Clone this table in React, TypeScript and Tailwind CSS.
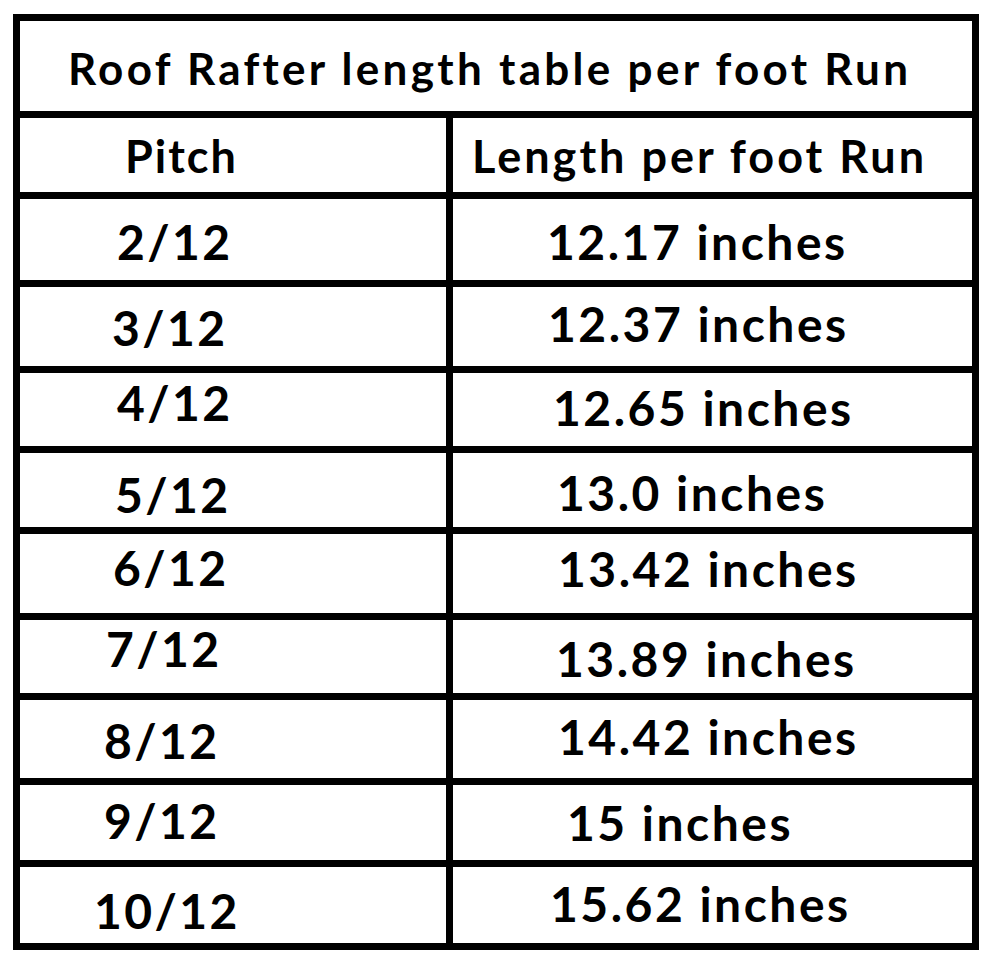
const rows = [
  { h: "h-[88px]", pitch: "2/12", pc: "pl-[97px] pt-[19px]", len: "12.17 inches", lc: "pl-[94px] pt-[19px]" },
  { h: "h-[86px]", pitch: "3/12", pc: "pl-[92px] pt-[17px]", len: "12.37 inches", lc: "pl-[95px] pt-[13px]" },
  { h: "h-[80px]", pitch: "4/12", pc: "pl-[97px] pt-[6px]", len: "12.65 inches", lc: "pl-[100px] pt-[11px]" },
  { h: "h-[81px]", pitch: "5/12", pc: "pl-[95px] pt-[18px]", len: "13.0 inches", lc: "pl-[104px] pt-[16px]" },
  { h: "h-[86px]", pitch: "6/12", pc: "pl-[93px] pt-[10px]", len: "13.42 inches", lc: "pl-[105px] pt-[11px]" },
  { h: "h-[80px]", pitch: "7/12", pc: "pl-[86px] pt-[5px]", len: "13.89 inches", lc: "pl-[103px] pt-[15px]" },
  { h: "h-[85px]", pitch: "8/12", pc: "pl-[84px] pt-[17px]", len: "14.42 inches", lc: "pl-[105px] pt-[13px]" },
  { h: "h-[82px]", pitch: "9/12", pc: "pl-[84px] pt-[12px]", len: "15 inches", lc: "pl-[114px] pt-[14px]" },
  { h: "h-[76px]", pitch: "10/12", pc: "pl-[74px] pt-[20px]", len: "15.62 inches", lc: "pl-[97px] pt-[13px]" },
];

export default function App() {
  return (
    <div
      className="min-h-screen w-[1000px] h-[976px] bg-white pt-[14px] pl-[13px] text-black"
      style={{ fontFamily: "Lato, 'Open Sans', sans-serif" }}
    >
      <div className="w-[966px] border-[7px] border-black">
        {/* titulo */}
        <div className="h-[97px] border-b-[7px] border-black pl-[48px] pt-[25px]">
          <span className="block text-[44px] font-bold leading-none tracking-[3.3px] whitespace-nowrap">
            Roof Rafter length table per foot Run
          </span>
        </div>

        {/* cabecalho */}
        <div className="flex h-[81px] border-b-[7px] border-black">
          <div className="w-[433px] border-r-[7px] border-black pl-[105px] pt-[16px]">
            <span className="block text-[45px] font-bold leading-none tracking-[2px]">Pitch</span>
          </div>
          <div className="flex-1 pl-[19px] pt-[16px]">
            <span className="block text-[45px] font-bold leading-none tracking-[3px] whitespace-nowrap">
              Length per foot Run
            </span>
          </div>
        </div>

        {rows.map((r, i) => (
          <div
            key={r.pitch}
            className={`flex ${r.h} ${i < rows.length - 1 ? "border-b-[7px] border-black" : ""}`}
          >
            <div className={`w-[433px] border-r-[7px] border-black ${r.pc}`}>
              <span className="block text-[48px] font-bold leading-none tracking-[2.4px]">{r.pitch}</span>
            </div>
            <div className={`flex-1 ${r.lc}`}>
              <span className="block text-[48px] font-bold leading-none tracking-[2.5px] whitespace-nowrap">
                {r.len}
              </span>
            </div>
          </div>
        ))}
      </div>
    </div>
  );
}
